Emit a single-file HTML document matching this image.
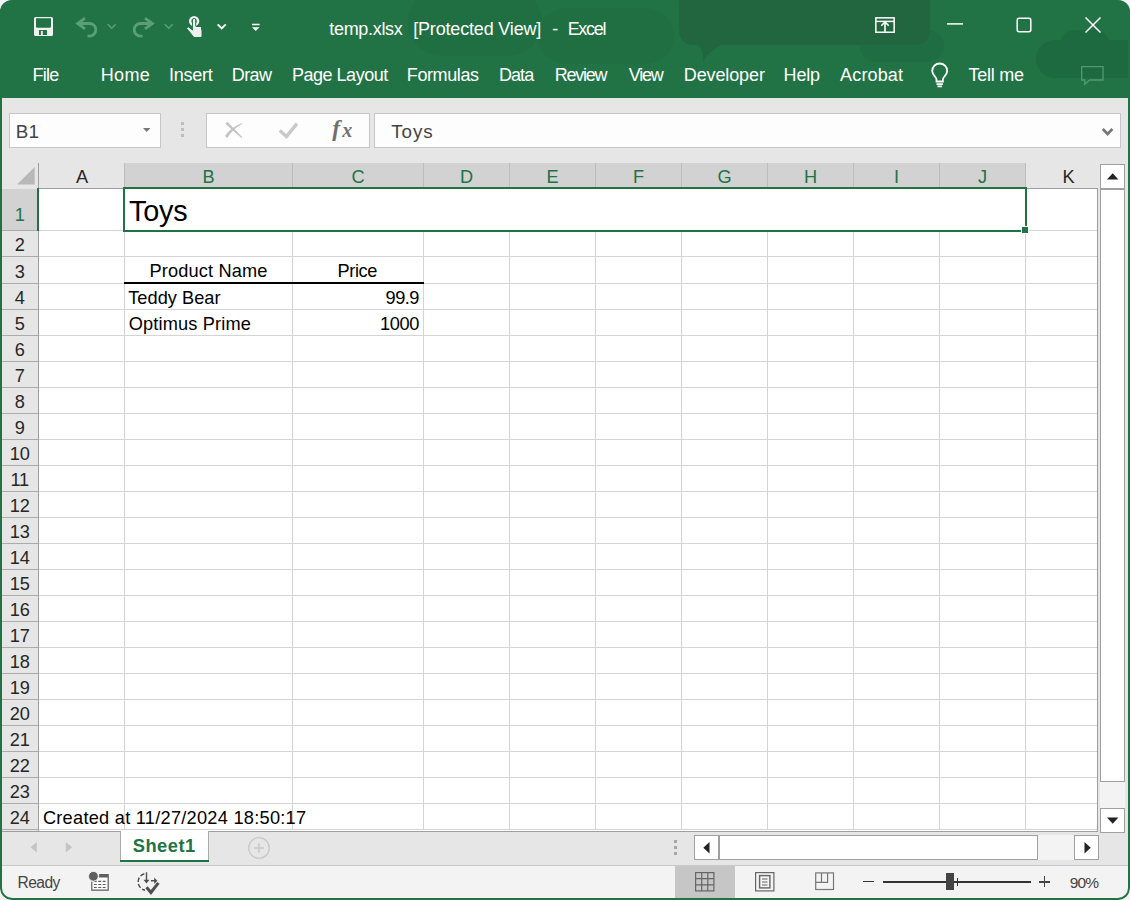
<!DOCTYPE html>
<html><head><meta charset="utf-8"><title>temp.xlsx [Protected View] - Excel</title>
<style>
*{box-sizing:border-box;margin:0;padding:0}
html,body{width:1130px;height:900px;overflow:hidden;background:#f3f3f3;font-family:"Liberation Sans",sans-serif}
#win{position:absolute;left:0;top:0;width:1130px;height:900px;border-radius:12px;overflow:hidden;background:#e6e6e6}
#frame{position:absolute;left:0;top:0;width:1130px;height:900px;border-radius:12px;border:2px solid #217346;border-top-width:0;z-index:50}
.tx{position:absolute;white-space:pre}
.a{position:absolute}
#top{position:absolute;left:0;top:0;width:1130px;height:98px;background:#217346;overflow:hidden}
.blob{position:absolute;background:#1e6c41}
.fbox{position:absolute;top:113px;height:35px;background:#fdfdfd;border:1px solid #c6c6c6}
#grid{position:absolute;left:2px;top:163px;width:1096px;height:669px;background:#fff;overflow:hidden}
.ch{position:absolute;top:163px;height:25px;background:#e6e6e6}
.chs{background:#d2d2d2}
.vl{position:absolute;width:1px;background:#d4d4d4}
.hl{position:absolute;height:1px;background:#d4d4d4}
.sb{position:absolute;background:#fff;border:1px solid #a0a0a0}
svg{position:absolute;overflow:visible}
</style></head><body>
<div id="win">

<div id="top">
<div class="blob" style="left:408px;top:-12px;width:134px;height:68px;border-radius:34px;background:#1f6f43"></div>
<div class="blob" style="left:538px;top:8px;width:136px;height:56px;border-radius:28px;background:#1f6f43"></div>
<div class="blob" style="left:860px;top:30px;width:84px;height:32px;border-radius:16px;background:#1f6e43"></div>
<div class="blob" style="left:679px;top:-10px;width:251px;height:55px;border-radius:14px;background:#226640"></div>
<svg style="left:696px;top:44px" width="30" height="20" viewBox="0 0 30 20"><path fill="#226640" d="M2 0H28Q12 6 7 19Q8 8 2 0z"/></svg>
<div class="blob" style="left:1036px;top:40px;width:110px;height:38px;border-radius:19px;background:#1e6a40"></div>
<div class="blob" style="left:1060px;top:30px;width:50px;height:30px;border-radius:15px;background:#1e6a40"></div>
</div>
<div class="tx" style="left:329.30px;top:20.00px;font-size:18px;line-height:18px;letter-spacing:-0.315px;color:#ffffff;font-weight:400;font-style:normal;font-family:'Liberation Sans', sans-serif">temp.xlsx</div>
<div class="tx" style="left:413.20px;top:20.00px;font-size:18px;line-height:18px;letter-spacing:-0.176px;color:#ffffff;font-weight:400;font-style:normal;font-family:'Liberation Sans', sans-serif">[Protected View]</div>
<div class="tx" style="left:552.30px;top:20.00px;font-size:18px;line-height:18px;letter-spacing:0.000px;color:#ffffff;font-weight:400;font-style:normal;font-family:'Liberation Sans', sans-serif">-</div>
<div class="tx" style="left:567.70px;top:20.00px;font-size:18px;line-height:18px;letter-spacing:-1.329px;color:#ffffff;font-weight:400;font-style:normal;font-family:'Liberation Sans', sans-serif">Excel</div>
<div class="tx" style="left:32.40px;top:66.00px;font-size:18px;line-height:18px;letter-spacing:-0.698px;color:#ffffff;font-weight:400;font-style:normal;font-family:'Liberation Sans', sans-serif">File</div>
<div class="tx" style="left:100.70px;top:66.00px;font-size:18px;line-height:18px;letter-spacing:0.365px;color:#ffffff;font-weight:400;font-style:normal;font-family:'Liberation Sans', sans-serif">Home</div>
<div class="tx" style="left:169.00px;top:66.00px;font-size:18px;line-height:18px;letter-spacing:-0.263px;color:#ffffff;font-weight:400;font-style:normal;font-family:'Liberation Sans', sans-serif">Insert</div>
<div class="tx" style="left:231.80px;top:66.00px;font-size:18px;line-height:18px;letter-spacing:-0.635px;color:#ffffff;font-weight:400;font-style:normal;font-family:'Liberation Sans', sans-serif">Draw</div>
<div class="tx" style="left:292.00px;top:66.00px;font-size:18px;line-height:18px;letter-spacing:-0.488px;color:#ffffff;font-weight:400;font-style:normal;font-family:'Liberation Sans', sans-serif">Page Layout</div>
<div class="tx" style="left:406.80px;top:66.00px;font-size:18px;line-height:18px;letter-spacing:-0.402px;color:#ffffff;font-weight:400;font-style:normal;font-family:'Liberation Sans', sans-serif">Formulas</div>
<div class="tx" style="left:498.90px;top:66.00px;font-size:18px;line-height:18px;letter-spacing:-0.904px;color:#ffffff;font-weight:400;font-style:normal;font-family:'Liberation Sans', sans-serif">Data</div>
<div class="tx" style="left:554.70px;top:66.00px;font-size:18px;line-height:18px;letter-spacing:-1.244px;color:#ffffff;font-weight:400;font-style:normal;font-family:'Liberation Sans', sans-serif">Review</div>
<div class="tx" style="left:628.70px;top:66.00px;font-size:18px;line-height:18px;letter-spacing:-1.230px;color:#ffffff;font-weight:400;font-style:normal;font-family:'Liberation Sans', sans-serif">View</div>
<div class="tx" style="left:683.80px;top:66.00px;font-size:18px;line-height:18px;letter-spacing:-0.119px;color:#ffffff;font-weight:400;font-style:normal;font-family:'Liberation Sans', sans-serif">Developer</div>
<div class="tx" style="left:783.60px;top:66.00px;font-size:18px;line-height:18px;letter-spacing:-0.203px;color:#ffffff;font-weight:400;font-style:normal;font-family:'Liberation Sans', sans-serif">Help</div>
<div class="tx" style="left:840.10px;top:66.00px;font-size:18px;line-height:18px;letter-spacing:0.145px;color:#ffffff;font-weight:400;font-style:normal;font-family:'Liberation Sans', sans-serif">Acrobat</div>
<div class="tx" style="left:968.60px;top:66.00px;font-size:18px;line-height:18px;letter-spacing:-0.267px;color:#ffffff;font-weight:400;font-style:normal;font-family:'Liberation Sans', sans-serif">Tell me</div>
<svg style="left:34px;top:17px" width="19" height="19" viewBox="0 0 19 19"><path fill="#f0f0f0" fill-rule="evenodd" d="M1.5 0h16A1.5 1.5 0 0 1 19 1.500v16A1.500 1.500 0 0 1 17.500 19h-16A1.500 1.500 0 0 1 0 17.500v-16A1.500 1.500 0 0 1 1.500 0zM2 1.300v8.200a1.300 1.300 0 0 0 1.300 1.300h12.400A1.300 1.300 0 0 0 17 9.500V1.300zM5 13.100h8v4.800h-8z"/><rect x="6.900" y="13.900" width="1.900" height="5" fill="#f0f0f0"/></svg>
<svg style="left:75px;top:17px" width="23" height="21" viewBox="0 0 23 21"><g fill="none" stroke="#5b9f79" stroke-width="2.8"><path d="M10 1.200L2.600 6.500L10 11.800"/><path d="M3 6.500H14.500A6.300 6.300 0 0 1 14.500 19.100H12.500"/></g></svg>
<svg style="left:107px;top:23px" width="10" height="7" viewBox="0 0 10 7"><path fill="none" stroke="#5b9f79" stroke-width="1.500" d="M0.700 1.300L4.700 5.300L8.700 1.300"/></svg>
<svg style="left:132px;top:17px" width="23" height="21" viewBox="0 0 23 21"><g fill="none" stroke="#5b9f79" stroke-width="2.800" transform="translate(23,0) scale(-1,1)"><path d="M10 1.200L2.600 6.500L10 11.800"/><path d="M3 6.500H14.500A6.300 6.300 0 0 1 14.500 19.100H12.500"/></g></svg>
<svg style="left:164px;top:23px" width="10" height="7" viewBox="0 0 10 7"><path fill="none" stroke="#5b9f79" stroke-width="1.500" d="M0.700 1.300L4.700 5.300L8.700 1.300"/></svg>
<svg style="left:186px;top:15px" width="18" height="23" viewBox="0 0 18 23"><circle cx="8.100" cy="6.100" r="3.950" fill="none" stroke="#efefef" stroke-width="2.500"/><path fill="#efefef" stroke="#217346" stroke-width="0.900" d="M6.500 5a1.600 1.600 0 0 1 3.200 0V11.200L14.600 13.600A2.600 2.600 0 0 1 16 16V21.900H8L0.700 13.300L2.400 11.900L6.500 15.200z"/><path fill="#efefef" d="M7 12h8v9.900H8.200L1.500 13.500l1-0.800L7 16z"/></svg>
<svg style="left:217px;top:23px" width="10" height="7" viewBox="0 0 10 7"><path fill="none" stroke="#ffffff" stroke-width="1.900" d="M0.700 1.300L4.700 5.300L8.700 1.300"/></svg>
<svg style="left:252px;top:23px" width="8" height="9" viewBox="0 0 8 9"><path fill="#ffffff" d="M0 0.800h7.600v1.500H0zM0 4.200h7.600L3.800 8z"/></svg>
<svg style="left:875px;top:17px" width="20" height="16" viewBox="0 0 20 16"><g fill="none" stroke="#ffffff" stroke-width="1.500"><rect x="0.850" y="0.850" width="18.300" height="14.400"/><path d="M0.850 4.400h18.300"/><path d="M10 15V4.800M6.300 8.700L10 5L13.700 8.700" stroke-width="1.600"/></g></svg>
<svg style="left:947px;top:23px" width="16" height="2" viewBox="0 0 16 2"><path stroke="#ffffff" stroke-width="1.500" d="M0 0.900h16"/></svg>
<svg style="left:1016px;top:17px" width="16" height="16" viewBox="0 0 16 16"><rect x="1.200" y="1.200" width="13.600" height="13.600" rx="2" fill="none" stroke="#ffffff" stroke-width="1.500"/></svg>
<svg style="left:1085px;top:17px" width="16" height="16" viewBox="0 0 16 16"><path stroke="#ffffff" stroke-width="1.500" fill="none" d="M0.500 0.500L15.500 15.500M15.500 0.500L0.500 15.500"/></svg>
<svg style="left:931px;top:63px" width="18" height="24" viewBox="0 0 18 24"><g fill="none" stroke="#ffffff" stroke-width="1.800"><path d="M5.500 18.500V16.500C5.500 14 1.200 12 1.200 8A7.500 7.500 0 0 1 16.200 8C16.200 12 11.900 14 11.900 16.500V18.500z"/><path d="M5.500 21.200h6.400M6.500 23.300h4.400"/></g></svg>
<svg style="left:1081px;top:66px" width="23" height="20" viewBox="0 0 23 20"><path fill="none" stroke="#559871" stroke-width="1.300" d="M0.700 0.700h21.300v13.300H8.500L3.800 18.300V14H0.700z"/></svg>
<div class="fbox" style="left:9px;width:152px"></div>
<div class="fbox" style="left:206px;width:164px"></div>
<div class="fbox" style="left:374px;width:747px"></div>
<div class="tx" style="left:15.80px;top:122.50px;font-size:18.8px;line-height:18.8px;letter-spacing:0.073px;color:#444444;font-weight:400;font-style:normal;font-family:'Liberation Sans', sans-serif">B1</div>
<div class="tx" style="left:391.30px;top:122.50px;font-size:18.8px;line-height:18.8px;letter-spacing:0.891px;color:#444444;font-weight:400;font-style:normal;font-family:'Liberation Sans', sans-serif">Toys</div>
<svg style="left:143px;top:128px" width="8" height="4" viewBox="0 0 8 4"><path fill="#777" d="M0 0h7.400L3.700 4z"/></svg>
<div class="a" style="left:181px;top:122px;width:3px;height:3px;background:#bdbdbd"></div>
<div class="a" style="left:181px;top:128px;width:3px;height:3px;background:#bdbdbd"></div>
<div class="a" style="left:181px;top:134px;width:3px;height:3px;background:#bdbdbd"></div>
<svg style="left:225px;top:122px" width="18" height="16" viewBox="0 0 18 16"><path fill="#c4c4c4" d="M0.300 1.700Q1 0.100 2.900 0.300Q9.500 7 17.300 15.300L16.500 15.900Q8 8.800 0.300 1.700zM0.200 13.800Q5.500 5.500 17.100 1.100L17.400 1.800Q7.500 7.200 2.500 15.700Q0.800 16 0.200 13.800z"/></svg>
<svg style="left:278px;top:121px" width="21" height="18" viewBox="0 0 21 18"><path fill="none" stroke="#c9c9c9" stroke-width="3.400" d="M1.800 9.600L8.400 15.600L19 2.600"/></svg>
<div class="tx" style="left:332.20px;top:117.30px;font-size:23.5px;line-height:23.5px;letter-spacing:0.000px;color:#707070;font-weight:700;font-style:italic;font-family:'Liberation Serif', serif">f</div>
<div class="tx" style="left:342.20px;top:120.20px;font-size:20px;line-height:20px;letter-spacing:0.000px;color:#707070;font-weight:700;font-style:italic;font-family:'Liberation Serif', serif">x</div>
<svg style="left:1102px;top:128px" width="12" height="9" viewBox="0 0 12 9"><path fill="none" stroke="#777" stroke-width="2.600" d="M0.800 1L5.600 6L10.400 1"/></svg>
<div class="a" style="left:2px;top:163px;width:1096px;height:668px;background:#fff"></div>
<div class="a" style="left:2px;top:163px;width:1096px;height:25px;background:#e6e6e6"></div>
<div class="a" style="left:2px;top:188px;width:36px;height:643px;background:#e6e6e6"></div>
<div class="a" style="left:124px;top:163px;width:902px;height:25px;background:#d2d2d2"></div>
<div class="a" style="left:2px;top:189px;width:36px;height:41px;background:#d2d2d2"></div>
<div class="a" style="left:38px;top:188px;width:1060px;height:1px;background:#9e9e9e"></div>
<div class="a" style="left:38px;top:163px;width:1px;height:668px;background:#9e9e9e"></div>
<div class="a" style="left:124px;top:163px;width:1px;height:25px;background:#bcbcbc"></div>
<div class="a" style="left:292px;top:163px;width:1px;height:25px;background:#bcbcbc"></div>
<div class="a" style="left:423px;top:163px;width:1px;height:25px;background:#bcbcbc"></div>
<div class="a" style="left:509px;top:163px;width:1px;height:25px;background:#bcbcbc"></div>
<div class="a" style="left:595px;top:163px;width:1px;height:25px;background:#bcbcbc"></div>
<div class="a" style="left:681px;top:163px;width:1px;height:25px;background:#bcbcbc"></div>
<div class="a" style="left:767px;top:163px;width:1px;height:25px;background:#bcbcbc"></div>
<div class="a" style="left:853px;top:163px;width:1px;height:25px;background:#bcbcbc"></div>
<div class="a" style="left:939px;top:163px;width:1px;height:25px;background:#bcbcbc"></div>
<div class="a" style="left:1025px;top:163px;width:1px;height:25px;background:#bcbcbc"></div>
<div class="a" style="left:124px;top:163px;width:1px;height:25px;background:#bcbcbc"></div>
<div class="a" style="left:2px;top:230px;width:36px;height:1px;background:#ababab"></div>
<div class="a" style="left:2px;top:256px;width:36px;height:1px;background:#ababab"></div>
<div class="a" style="left:2px;top:283px;width:36px;height:1px;background:#ababab"></div>
<div class="a" style="left:2px;top:309px;width:36px;height:1px;background:#ababab"></div>
<div class="a" style="left:2px;top:335px;width:36px;height:1px;background:#ababab"></div>
<div class="a" style="left:2px;top:361px;width:36px;height:1px;background:#ababab"></div>
<div class="a" style="left:2px;top:387px;width:36px;height:1px;background:#ababab"></div>
<div class="a" style="left:2px;top:413px;width:36px;height:1px;background:#ababab"></div>
<div class="a" style="left:2px;top:439px;width:36px;height:1px;background:#ababab"></div>
<div class="a" style="left:2px;top:465px;width:36px;height:1px;background:#ababab"></div>
<div class="a" style="left:2px;top:491px;width:36px;height:1px;background:#ababab"></div>
<div class="a" style="left:2px;top:517px;width:36px;height:1px;background:#ababab"></div>
<div class="a" style="left:2px;top:543px;width:36px;height:1px;background:#ababab"></div>
<div class="a" style="left:2px;top:569px;width:36px;height:1px;background:#ababab"></div>
<div class="a" style="left:2px;top:595px;width:36px;height:1px;background:#ababab"></div>
<div class="a" style="left:2px;top:621px;width:36px;height:1px;background:#ababab"></div>
<div class="a" style="left:2px;top:647px;width:36px;height:1px;background:#ababab"></div>
<div class="a" style="left:2px;top:673px;width:36px;height:1px;background:#ababab"></div>
<div class="a" style="left:2px;top:699px;width:36px;height:1px;background:#ababab"></div>
<div class="a" style="left:2px;top:725px;width:36px;height:1px;background:#ababab"></div>
<div class="a" style="left:2px;top:751px;width:36px;height:1px;background:#ababab"></div>
<div class="a" style="left:2px;top:777px;width:36px;height:1px;background:#ababab"></div>
<div class="a" style="left:2px;top:803px;width:36px;height:1px;background:#ababab"></div>
<div class="a" style="left:2px;top:829px;width:36px;height:1px;background:#ababab"></div>
<div class="vl" style="left:124px;top:189px;height:641px"></div>
<div class="vl" style="left:292px;top:189px;height:641px"></div>
<div class="vl" style="left:423px;top:189px;height:641px"></div>
<div class="vl" style="left:509px;top:189px;height:641px"></div>
<div class="vl" style="left:595px;top:189px;height:641px"></div>
<div class="vl" style="left:681px;top:189px;height:641px"></div>
<div class="vl" style="left:767px;top:189px;height:641px"></div>
<div class="vl" style="left:853px;top:189px;height:641px"></div>
<div class="vl" style="left:939px;top:189px;height:641px"></div>
<div class="vl" style="left:1025px;top:189px;height:641px"></div>
<div class="hl" style="left:39px;top:230px;width:1058px"></div>
<div class="hl" style="left:39px;top:256px;width:1058px"></div>
<div class="hl" style="left:39px;top:283px;width:1058px"></div>
<div class="hl" style="left:39px;top:309px;width:1058px"></div>
<div class="hl" style="left:39px;top:335px;width:1058px"></div>
<div class="hl" style="left:39px;top:361px;width:1058px"></div>
<div class="hl" style="left:39px;top:387px;width:1058px"></div>
<div class="hl" style="left:39px;top:413px;width:1058px"></div>
<div class="hl" style="left:39px;top:439px;width:1058px"></div>
<div class="hl" style="left:39px;top:465px;width:1058px"></div>
<div class="hl" style="left:39px;top:491px;width:1058px"></div>
<div class="hl" style="left:39px;top:517px;width:1058px"></div>
<div class="hl" style="left:39px;top:543px;width:1058px"></div>
<div class="hl" style="left:39px;top:569px;width:1058px"></div>
<div class="hl" style="left:39px;top:595px;width:1058px"></div>
<div class="hl" style="left:39px;top:621px;width:1058px"></div>
<div class="hl" style="left:39px;top:647px;width:1058px"></div>
<div class="hl" style="left:39px;top:673px;width:1058px"></div>
<div class="hl" style="left:39px;top:699px;width:1058px"></div>
<div class="hl" style="left:39px;top:725px;width:1058px"></div>
<div class="hl" style="left:39px;top:751px;width:1058px"></div>
<div class="hl" style="left:39px;top:777px;width:1058px"></div>
<div class="hl" style="left:39px;top:803px;width:1058px"></div>
<div class="hl" style="left:39px;top:829px;width:1058px"></div>
<div class="a" style="left:125px;top:189px;width:900px;height:41px;background:#fff"></div>
<div class="a" style="left:1097px;top:188px;width:1px;height:644px;background:#9e9e9e"></div>
<div class="a" style="left:2px;top:831px;width:1096px;height:1px;background:#9e9e9e"></div>
<svg style="left:17.300px;top:167.300px" width="18" height="18" viewBox="0 0 18 18"><path fill="#b8b8b8" d="M17.700 0V17.500H0z"/></svg>
<div class="tx" style="left:39px;width:86px;top:167px;text-align:center;font-size:18.2px;line-height:20px;color:#262626">A</div>
<div class="tx" style="left:124px;width:169px;top:167px;text-align:center;font-size:18.2px;line-height:20px;color:#217346">B</div>
<div class="tx" style="left:292px;width:132px;top:167px;text-align:center;font-size:18.2px;line-height:20px;color:#217346">C</div>
<div class="tx" style="left:423px;width:87px;top:167px;text-align:center;font-size:18.2px;line-height:20px;color:#217346">D</div>
<div class="tx" style="left:509px;width:87px;top:167px;text-align:center;font-size:18.2px;line-height:20px;color:#217346">E</div>
<div class="tx" style="left:595px;width:87px;top:167px;text-align:center;font-size:18.2px;line-height:20px;color:#217346">F</div>
<div class="tx" style="left:681px;width:87px;top:167px;text-align:center;font-size:18.2px;line-height:20px;color:#217346">G</div>
<div class="tx" style="left:767px;width:87px;top:167px;text-align:center;font-size:18.2px;line-height:20px;color:#217346">H</div>
<div class="tx" style="left:853px;width:87px;top:167px;text-align:center;font-size:18.2px;line-height:20px;color:#217346">I</div>
<div class="tx" style="left:939px;width:87px;top:167px;text-align:center;font-size:18.2px;line-height:20px;color:#217346">J</div>
<div class="tx" style="left:1025px;width:87px;top:167px;text-align:center;font-size:18.2px;line-height:20px;color:#262626">K</div>
<div class="tx" style="left:1.800px;width:36px;top:205.59px;text-align:center;font-size:18.2px;line-height:18.2px;color:#217346;letter-spacing:-0.1px">1</div>
<div class="tx" style="left:1.800px;width:36px;top:235.59px;text-align:center;font-size:18.2px;line-height:18.2px;color:#262626;letter-spacing:-0.1px">2</div>
<div class="tx" style="left:1.800px;width:36px;top:262.59px;text-align:center;font-size:18.2px;line-height:18.2px;color:#262626;letter-spacing:-0.1px">3</div>
<div class="tx" style="left:1.800px;width:36px;top:288.59px;text-align:center;font-size:18.2px;line-height:18.2px;color:#262626;letter-spacing:-0.1px">4</div>
<div class="tx" style="left:1.800px;width:36px;top:314.59px;text-align:center;font-size:18.2px;line-height:18.2px;color:#262626;letter-spacing:-0.1px">5</div>
<div class="tx" style="left:1.800px;width:36px;top:340.59px;text-align:center;font-size:18.2px;line-height:18.2px;color:#262626;letter-spacing:-0.1px">6</div>
<div class="tx" style="left:1.800px;width:36px;top:366.59px;text-align:center;font-size:18.2px;line-height:18.2px;color:#262626;letter-spacing:-0.1px">7</div>
<div class="tx" style="left:1.800px;width:36px;top:392.59px;text-align:center;font-size:18.2px;line-height:18.2px;color:#262626;letter-spacing:-0.1px">8</div>
<div class="tx" style="left:1.800px;width:36px;top:418.59px;text-align:center;font-size:18.2px;line-height:18.2px;color:#262626;letter-spacing:-0.1px">9</div>
<div class="tx" style="left:1.800px;width:36px;top:444.59px;text-align:center;font-size:18.2px;line-height:18.2px;color:#262626;letter-spacing:-0.1px">10</div>
<div class="tx" style="left:1.800px;width:36px;top:470.59px;text-align:center;font-size:18.2px;line-height:18.2px;color:#262626;letter-spacing:-0.1px">11</div>
<div class="tx" style="left:1.800px;width:36px;top:496.59px;text-align:center;font-size:18.2px;line-height:18.2px;color:#262626;letter-spacing:-0.1px">12</div>
<div class="tx" style="left:1.800px;width:36px;top:522.59px;text-align:center;font-size:18.2px;line-height:18.2px;color:#262626;letter-spacing:-0.1px">13</div>
<div class="tx" style="left:1.800px;width:36px;top:548.59px;text-align:center;font-size:18.2px;line-height:18.2px;color:#262626;letter-spacing:-0.1px">14</div>
<div class="tx" style="left:1.800px;width:36px;top:574.59px;text-align:center;font-size:18.2px;line-height:18.2px;color:#262626;letter-spacing:-0.1px">15</div>
<div class="tx" style="left:1.800px;width:36px;top:600.59px;text-align:center;font-size:18.2px;line-height:18.2px;color:#262626;letter-spacing:-0.1px">16</div>
<div class="tx" style="left:1.800px;width:36px;top:626.59px;text-align:center;font-size:18.2px;line-height:18.2px;color:#262626;letter-spacing:-0.1px">17</div>
<div class="tx" style="left:1.800px;width:36px;top:652.59px;text-align:center;font-size:18.2px;line-height:18.2px;color:#262626;letter-spacing:-0.1px">18</div>
<div class="tx" style="left:1.800px;width:36px;top:678.59px;text-align:center;font-size:18.2px;line-height:18.2px;color:#262626;letter-spacing:-0.1px">19</div>
<div class="tx" style="left:1.800px;width:36px;top:704.59px;text-align:center;font-size:18.2px;line-height:18.2px;color:#262626;letter-spacing:-0.1px">20</div>
<div class="tx" style="left:1.800px;width:36px;top:730.59px;text-align:center;font-size:18.2px;line-height:18.2px;color:#262626;letter-spacing:-0.1px">21</div>
<div class="tx" style="left:1.800px;width:36px;top:756.59px;text-align:center;font-size:18.2px;line-height:18.2px;color:#262626;letter-spacing:-0.1px">22</div>
<div class="tx" style="left:1.800px;width:36px;top:782.59px;text-align:center;font-size:18.2px;line-height:18.2px;color:#262626;letter-spacing:-0.1px">23</div>
<div class="tx" style="left:1.800px;width:36px;top:808.59px;text-align:center;font-size:18.2px;line-height:18.2px;color:#262626;letter-spacing:-0.1px">24</div>
<div class="tx" style="left:129.10px;top:197.00px;font-size:28.8px;line-height:28.8px;letter-spacing:-0.204px;color:#000;font-weight:400;font-style:normal;font-family:'Liberation Sans', sans-serif">Toys</div>
<div class="tx" style="left:149.40px;top:262.00px;font-size:18.2px;line-height:18.2px;letter-spacing:0.161px;color:#000;font-weight:400;font-style:normal;font-family:'Liberation Sans', sans-serif">Product Name</div>
<div class="tx" style="left:337.60px;top:262.00px;font-size:18.2px;line-height:18.2px;letter-spacing:-0.430px;color:#000;font-weight:400;font-style:normal;font-family:'Liberation Sans', sans-serif">Price</div>
<div class="tx" style="left:128.20px;top:289.00px;font-size:18.2px;line-height:18.2px;letter-spacing:0.039px;color:#000;font-weight:400;font-style:normal;font-family:'Liberation Sans', sans-serif">Teddy Bear</div>
<div class="tx" style="left:385.60px;top:289.00px;font-size:18.2px;line-height:18.2px;letter-spacing:-0.528px;color:#000;font-weight:400;font-style:normal;font-family:'Liberation Sans', sans-serif">99.9</div>
<div class="tx" style="left:128.70px;top:315.00px;font-size:18.2px;line-height:18.2px;letter-spacing:0.163px;color:#000;font-weight:400;font-style:normal;font-family:'Liberation Sans', sans-serif">Optimus Prime</div>
<div class="tx" style="left:379.90px;top:315.00px;font-size:18.2px;line-height:18.2px;letter-spacing:-0.315px;color:#000;font-weight:400;font-style:normal;font-family:'Liberation Sans', sans-serif">1000</div>
<div class="tx" style="left:42.90px;top:809.00px;font-size:18.2px;line-height:18.2px;letter-spacing:0.266px;color:#000;font-weight:400;font-style:normal;font-family:'Liberation Sans', sans-serif">Created at 11/27/2024 18:50:17</div>
<div class="a" style="left:124px;top:282px;width:300px;height:2px;background:#000"></div>
<div class="a" style="left:123px;top:187px;width:904px;height:45px;border:2px solid #217346"></div>
<div class="a" style="left:37px;top:188px;width:2px;height:43px;background:#217346"></div>
<div class="a" style="left:124px;top:187px;width:902px;height:2px;background:#217346"></div>
<div class="a" style="left:1021px;top:226px;width:8px;height:8px;background:#217346;border:1px solid #fff"></div>
<div class="a" style="left:1100px;top:189px;width:25px;height:619px;background:#f3f3f3"></div>
<div class="sb" style="left:1100px;top:164px;width:25px;height:25px"></div>
<div class="sb" style="left:1100px;top:189px;width:25px;height:593px"></div>
<div class="sb" style="left:1100px;top:808px;width:25px;height:25px"></div>
<svg style="left:1107px;top:173px" width="12" height="7" viewBox="0 0 12 7"><path fill="#222" d="M0 6.500L5.700 0.300L11.400 6.500z"/></svg>
<svg style="left:1107px;top:817px" width="12" height="7" viewBox="0 0 12 7"><path fill="#222" d="M0 0.500L5.700 6.700L11.400 0.500z"/></svg>
<div class="a" style="left:719px;top:835px;width:356px;height:25px;background:#f3f3f3"></div>
<div class="sb" style="left:694px;top:835px;width:25px;height:25px"></div>
<div class="sb" style="left:719px;top:835px;width:319px;height:25px"></div>
<div class="sb" style="left:1074px;top:835px;width:25px;height:25px"></div>
<svg style="left:702.600px;top:842px" width="7" height="12" viewBox="0 0 7 12"><path fill="#222" d="M6.500 0L0.300 5.700L6.500 11.400z"/></svg>
<svg style="left:1084px;top:842px" width="7" height="12" viewBox="0 0 7 12"><path fill="#222" d="M0.500 0L6.700 5.700L0.500 11.400z"/></svg>
<div class="a" style="left:674px;top:840px;width:3px;height:3px;background:#a6a6a6"></div>
<div class="a" style="left:674px;top:846px;width:3px;height:3px;background:#a6a6a6"></div>
<div class="a" style="left:674px;top:852px;width:3px;height:3px;background:#a6a6a6"></div>
<div class="a" style="left:120px;top:831px;width:89px;height:31px;background:#fff;border-left:1px solid #ababab;border-right:1px solid #ababab"></div>
<div class="a" style="left:120px;top:860px;width:89px;height:2px;background:#217346"></div>
<div class="tx" style="left:132.70px;top:837.30px;font-size:18.3px;line-height:18.3px;letter-spacing:0.524px;color:#217346;font-weight:700;font-style:normal;font-family:'Liberation Sans', sans-serif">Sheet1</div>
<svg style="left:30px;top:842px" width="8" height="11" viewBox="0 0 8 11"><path fill="#c4c4c4" d="M6.800 0L0.500 5.200L6.800 10.400z"/></svg>
<svg style="left:65px;top:842px" width="8" height="11" viewBox="0 0 8 11"><path fill="#c4c4c4" d="M0.800 0L7.100 5.200L0.800 10.400z"/></svg>
<svg style="left:248px;top:837px" width="22" height="22" viewBox="0 0 22 22"><g fill="none" stroke="#c8c8c8" stroke-width="1.300"><circle cx="11" cy="11" r="10.300"/><path d="M11 6v10M6 11h10"/></g></svg>
<div class="a" style="left:0;top:865px;width:1130px;height:1px;background:#c8c8c8"></div>
<div class="a" style="left:0;top:866px;width:1130px;height:34px;background:#f3f3f3"></div>
<div class="a" style="left:675px;top:866px;width:60px;height:32px;background:#c6c6c6"></div>
<div class="tx" style="left:17.60px;top:874.90px;font-size:15.6px;line-height:15.6px;letter-spacing:-0.595px;color:#444444;font-weight:400;font-style:normal;font-family:'Liberation Sans', sans-serif">Ready</div>
<div class="tx" style="left:1069.80px;top:874.70px;font-size:15.5px;line-height:15.5px;letter-spacing:-0.870px;color:#444444;font-weight:400;font-style:normal;font-family:'Liberation Sans', sans-serif">90%</div>
<svg style="left:89px;top:872px" width="20" height="19" viewBox="0 0 20 19"><rect x="2.800" y="5" width="16.400" height="13.100" fill="#fbfbfb"/><path fill="none" stroke="#5e5e5e" stroke-width="1.200" d="M2.800 9.500V18.100H19.200V5"/><rect x="10.100" y="2" width="9.700" height="3.500" fill="#5e5e5e"/><path stroke="#5e5e5e" stroke-width="1.200" stroke-dasharray="2.900 1.500" d="M4.900 9.400h12M4.900 12.500h12M4.900 15.500h12"/><circle cx="4.400" cy="4.300" r="4.900" fill="#5e5e5e" stroke="#f3f3f3" stroke-width="1"/></svg>
<svg style="left:137px;top:872px" width="23" height="22" viewBox="0 0 23 22"><path fill="none" stroke="#505050" stroke-width="1.500" stroke-dasharray="4.400 2" d="M7.330 1.790A8.400 8.400 0 0 0 8.040 18.170"/><path fill="none" stroke="#505050" stroke-width="1.400" d="M9.500 0.200V9M13.900 8.700H19"/><path fill="#505050" d="M6.500 7.800h6L9.500 11.500zM17.200 5.500L20.400 8.700L17.200 11.900z"/><path fill="none" stroke="#505050" stroke-width="3" d="M9.500 15.300L13.900 20.500L21.400 10.800"/></svg>
<svg style="left:695px;top:872px" width="20" height="20" viewBox="0 0 20 20"><g fill="none" stroke="#666" stroke-width="1.200"><rect x="0.600" y="0.600" width="18.300" height="18.300"/><path d="M6.700 0.600v18.300M12.800 0.600v18.300M0.600 6.700h18.300M0.600 12.800h18.300"/></g></svg>
<svg style="left:755px;top:872px" width="20" height="20" viewBox="0 0 20 20"><g fill="none" stroke="#666" stroke-width="1.200"><rect x="0.600" y="0.600" width="18.300" height="18.300"/><rect x="4.600" y="3.600" width="10.300" height="12.300" stroke-width="1.400"/><path d="M7 7h5.500M7 10h5.500M7 13h5.500"/></g></svg>
<svg style="left:815px;top:872px" width="20" height="18" viewBox="0 0 20 18"><g fill="none" stroke="#777" stroke-width="1.200"><rect x="0.700" y="0.900" width="17.800" height="16.600"/><path d="M0.700 10.400h11.900V0.900M6.500 0.900v9.500"/></g></svg>
<div class="a" style="left:863px;top:880.600px;width:11.300px;height:1.400px;background:#333"></div>
<div class="a" style="left:883px;top:881px;width:148px;height:2px;background:#333"></div>
<div class="a" style="left:946px;top:873px;width:8px;height:17px;background:#444"></div>
<div class="a" style="left:956.500px;top:878px;width:1.500px;height:8px;background:#333"></div>
<div class="a" style="left:1039px;top:881px;width:11px;height:1.500px;background:#444"></div>
<div class="a" style="left:1043.800px;top:876px;width:1.500px;height:11px;background:#444"></div>
<div id="frame"></div>
</div>
</body></html>
